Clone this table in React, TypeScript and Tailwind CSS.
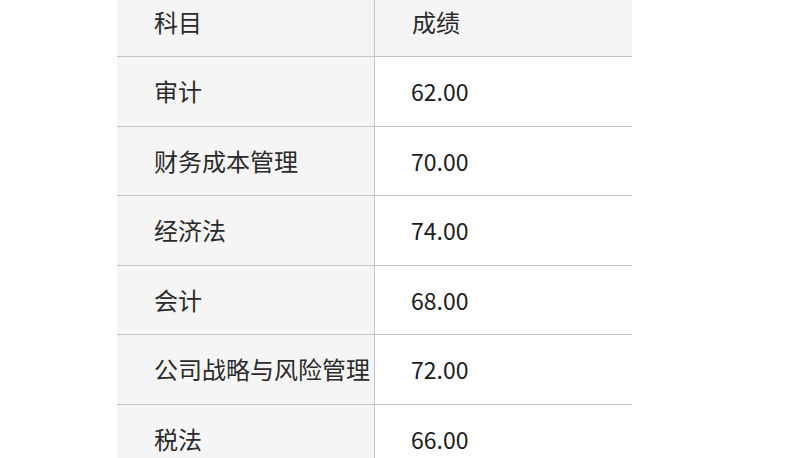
const rows = [
  { subject: "审计", score: "62.00" },
  { subject: "财务成本管理", score: "70.00" },
  { subject: "经济法", score: "74.00" },
  { subject: "会计", score: "68.00" },
  { subject: "公司战略与风险管理", score: "72.00" },
  { subject: "税法", score: "66.00" },
];

export default function App() {
  return (
    <div
      className="w-[800px] h-[458px] overflow-hidden bg-white"
      style={{ fontFamily: '"Noto Sans CJK SC", "Noto Sans", sans-serif' }}
    >
      <div className="ml-[117px] mt-[-13px] w-[515px] text-[24px] text-[#2a2a2a]">
        {/* header */}
        <div className="grid grid-cols-[258px_257px] h-[70px] bg-[#f4f4f4] border-b border-[#c4c4c4]">
          <div className="flex items-center pl-[37px] border-r border-[#c4c4c4]">科目</div>
          <div className="flex items-center pl-[37px]">成绩</div>
        </div>
        {rows.map((r) => (
          <div
            key={r.subject}
            className="grid grid-cols-[258px_257px] h-[69.5px] border-b border-[#c4c4c4]"
          >
            <div className="flex items-center pl-[37px] bg-[#f5f5f5] border-r border-[#c4c4c4] whitespace-nowrap">
              {r.subject}
            </div>
            <div className="flex items-center pl-[36px] bg-white text-[23px] text-[#1c1c1c]">
              {r.score}
            </div>
          </div>
        ))}
      </div>
    </div>
  );
}
